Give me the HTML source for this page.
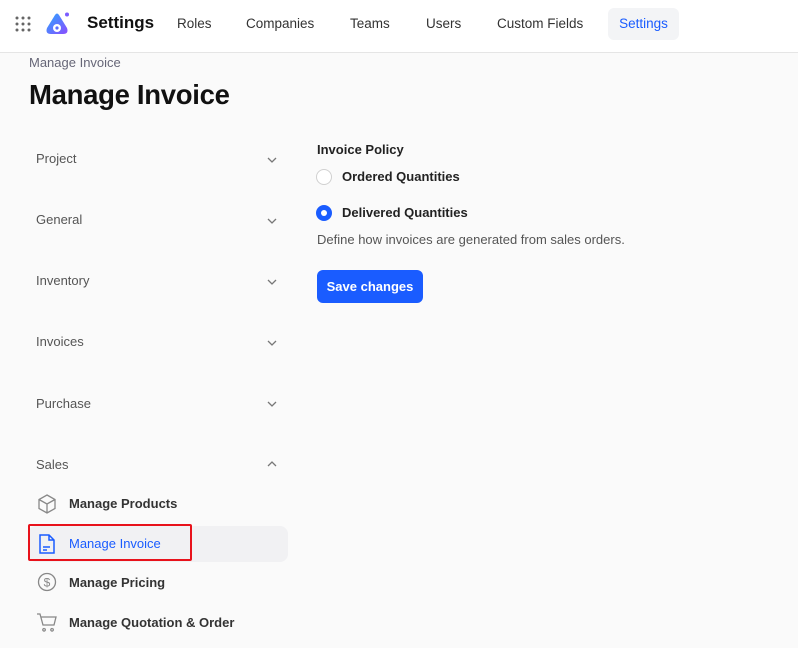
<!DOCTYPE html>
<html><head><meta charset="utf-8"><style>
*{margin:0;padding:0;box-sizing:border-box}
body{width:798px;height:648px;overflow:hidden;background:#fafafa;font-family:"Liberation Sans",sans-serif;position:relative;color:#111}
.hdr{position:absolute;left:0;top:0;width:798px;height:53px;background:#fff;border-bottom:1px solid #e5e5e5}
.a{position:absolute;white-space:nowrap}
.nav{font-size:13.5px;color:#333;top:16px}
.side{font-size:13px;color:#555;left:36px}
.chev{position:absolute;left:266px;width:12px;height:8px}
.sub{font-size:13px;color:#333;left:69px;font-weight:bold}
</style></head><body>
<div class="hdr">
<svg class="a" style="left:15px;top:16px" width="16" height="16" viewBox="0 0 16 16" fill="#666"><circle cx="2" cy="2" r="1.5"/><circle cx="8" cy="2" r="1.5"/><circle cx="14" cy="2" r="1.5"/><circle cx="2" cy="8" r="1.5"/><circle cx="8" cy="8" r="1.5"/><circle cx="14" cy="8" r="1.5"/><circle cx="2" cy="14" r="1.5"/><circle cx="8" cy="14" r="1.5"/><circle cx="14" cy="14" r="1.5"/></svg>
<svg class="a" style="left:45px;top:12px" width="26" height="24" viewBox="0 0 26 24"><defs><linearGradient id="g" x1="0" y1="0" x2="1" y2="1"><stop offset="0" stop-color="#2aa8ff"/><stop offset="1" stop-color="#8a4dff"/></linearGradient></defs><path d="M10 3 Q12 0 14 3 L22 16 Q24 22 18 22 L6 22 Q0 22 2 16 Z" fill="url(#g)"/><circle cx="12" cy="16" r="4" fill="#fff"/><circle cx="12" cy="16" r="1.6" fill="#5a6cff"/><circle cx="22" cy="2.5" r="2" fill="#7a5cff"/></svg>
<div class="a" style="left:87px;top:13px;font-size:17px;font-weight:bold">Settings</div>
<div class="a nav" style="left:177px">Roles</div>
<div class="a nav" style="left:246px">Companies</div>
<div class="a nav" style="left:350px">Teams</div>
<div class="a nav" style="left:426px">Users</div>
<div class="a nav" style="left:497px">Custom Fields</div>
<div class="a" style="left:608px;top:8px;width:71px;height:32px;background:#f3f4f6;border-radius:6px;color:#1a5cff;font-size:13.5px;text-align:center;line-height:32px">Settings</div>
</div>
<div class="a" style="left:29px;top:55px;font-size:13px;color:#667">Manage Invoice</div>
<div class="a" style="left:29px;top:79px;font-size:27.5px;font-weight:bold;letter-spacing:-0.3px">Manage Invoice</div>

<div class="a side" style="top:151px">Project</div>
<div class="a side" style="top:212px">General</div>
<div class="a side" style="top:273px">Inventory</div>
<div class="a side" style="top:334px">Invoices</div>
<div class="a side" style="top:396px">Purchase</div>
<div class="a side" style="top:457px">Sales</div>
<svg class="chev" style="top:156px" viewBox="0 0 12 8"><path d="M2 2l4 4 4-4" fill="none" stroke="#777" stroke-width="1.3"/></svg>
<svg class="chev" style="top:217px" viewBox="0 0 12 8"><path d="M2 2l4 4 4-4" fill="none" stroke="#777" stroke-width="1.3"/></svg>
<svg class="chev" style="top:278px" viewBox="0 0 12 8"><path d="M2 2l4 4 4-4" fill="none" stroke="#777" stroke-width="1.3"/></svg>
<svg class="chev" style="top:339px" viewBox="0 0 12 8"><path d="M2 2l4 4 4-4" fill="none" stroke="#777" stroke-width="1.3"/></svg>
<svg class="chev" style="top:400px" viewBox="0 0 12 8"><path d="M2 2l4 4 4-4" fill="none" stroke="#777" stroke-width="1.3"/></svg>
<svg class="chev" style="top:460px" viewBox="0 0 12 8"><path d="M2 6l4-4 4 4" fill="none" stroke="#777" stroke-width="1.3"/></svg>

<div class="a" style="left:28px;top:526px;width:260px;height:36px;background:#f1f1f3;border-radius:8px"></div>
<div class="a" style="left:28px;top:524px;width:164px;height:37px;border:2px solid #e8121b;border-radius:2px"></div>
<svg class="a" style="left:36px;top:493px" width="22" height="22" viewBox="0 0 22 22" fill="none" stroke="#888" stroke-width="1.3"><path d="M11 2l8 4.5v9L11 20l-8-4.5v-9z M3 6.5L11 11l8-4.5 M11 11v9"/></svg>
<div class="a sub" style="top:496px">Manage Products</div>
<svg class="a" style="left:37px;top:533px" width="20" height="22" viewBox="0 0 20 22" fill="none" stroke="#1a5cff" stroke-width="1.5"><path d="M3 2h9l5 5v13H3z M12 2v5h5 M6 14h7 M6 17h4"/></svg>
<div class="a sub" style="top:536px;color:#1a5cff;font-weight:normal">Manage Invoice</div>
<svg class="a" style="left:37px;top:572px" width="20" height="20" viewBox="0 0 20 20" fill="none" stroke="#888" stroke-width="1.3"><circle cx="10" cy="10" r="8.5"/><text x="10" y="14.5" font-size="12" text-anchor="middle" fill="#888" stroke="none" font-family="Liberation Sans">$</text></svg>
<div class="a sub" style="top:575px">Manage Pricing</div>
<svg class="a" style="left:36px;top:612px" width="22" height="20" viewBox="0 0 22 20" fill="none" stroke="#888" stroke-width="1.3"><path d="M1 2h3l3 11h11l2-8H5 M8 16.5a1.3 1.3 0 1 0 .1 0 M16 16.5a1.3 1.3 0 1 0 .1 0"/></svg>
<div class="a sub" style="top:615px">Manage Quotation &amp; Order</div>

<div class="a" style="left:317px;top:142px;font-size:13px;font-weight:bold;color:#222">Invoice Policy</div>
<div class="a" style="left:316px;top:169px;width:16px;height:16px;border:1px solid #d0d0d0;border-radius:50%;background:#fff"></div>
<div class="a" style="left:342px;top:169px;font-size:13px;font-weight:bold;color:#222">Ordered Quantities</div>
<div class="a" style="left:316px;top:205px;width:16px;height:16px;border-radius:50%;background:#1a5cff"><div style="margin:5px;width:6px;height:6px;border-radius:50%;background:#fff"></div></div>
<div class="a" style="left:342px;top:205px;font-size:13px;font-weight:bold;color:#222">Delivered Quantities</div>
<div class="a" style="left:317px;top:232px;font-size:13px;color:#555">Define how invoices are generated from sales orders.</div>
<div class="a" style="left:317px;top:270px;width:106px;height:33px;background:#1a5cff;border-radius:6px;color:#fff;font-size:13px;font-weight:bold;text-align:center;line-height:33px">Save changes</div>
</body></html>
